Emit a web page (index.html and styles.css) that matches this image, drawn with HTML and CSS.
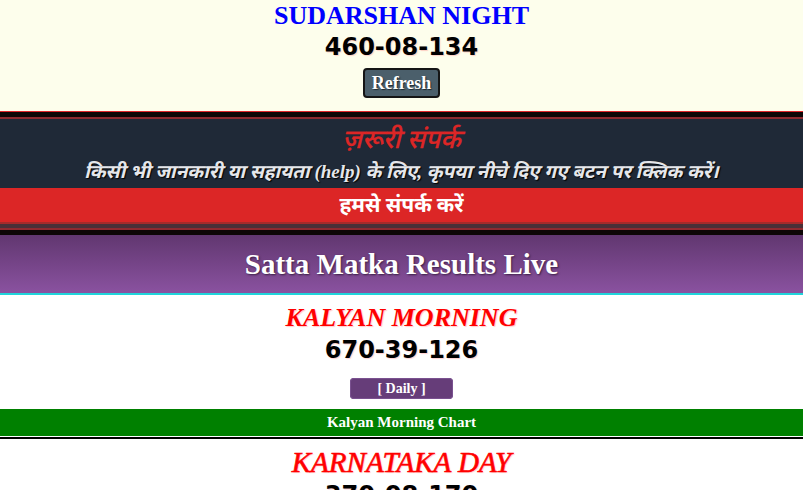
FILE: index.html
```html
<!DOCTYPE html>
<html lang="hi">
<head>
<meta charset="utf-8">
<title>Satta Matka Results Live</title>
<link rel="stylesheet" href="styles.css">
</head>
<body>
  <section class="live-top">
    <div class="live-name">SUDARSHAN NIGHT</div>
    <div class="result-num live-num">460-08-134</div>
    <button class="refresh-btn">Refresh</button>
  </section>

  <section class="contact-wrap">
    <div class="contact-box">
      <div class="contact-title">ज़रूरी संपर्क</div>
      <div class="contact-text">किसी भी जानकारी या सहायता (help) के लिए, कृपया नीचे दिए गए बटन पर क्लिक करें।</div>
      <div class="contact-btn">हमसे संपर्क करें</div>
    </div>
  </section>

  <header class="results-head">Satta Matka Results Live</header>

  <section class="game-card">
    <div class="game-name">KALYAN MORNING</div>
    <div class="result-num">670-39-126</div>
    <span class="daily-btn">[ Daily ]</span>
    <div class="chart-bar">Kalyan Morning Chart</div>
  </section>

  <section class="game-card">
    <div class="game-name game-name-narrow">KARNATAKA DAY</div>
    <div class="result-num">370-08-170</div>
    <span class="daily-btn">[ Daily ]</span>
    <div class="chart-bar">Karnataka Day Chart</div>
  </section>
</body>
</html>
```

FILE: styles.css
```css
html, body {
  margin: 0;
  padding: 0;
  background: #ffffff;
}

body {
  font-family: "Liberation Serif", "Noto Sans Devanagari", serif;
}

.live-top {
  background: #fdfeec;
  display: flex;
  flex-direction: column;
  align-items: center;
  padding: 2px 0 13px;
  border-bottom: 1px solid #e0262a;
}

.live-name {
  color: #0000ff;
  font-weight: bold;
  font-size: 26px;
  line-height: 28px;
}

.result-num {
  font-family: "DejaVu Sans", "Liberation Sans", sans-serif;
  font-weight: bold;
  font-size: 24px;
  line-height: 28px;
  color: #000;
  margin-top: 3px;
  text-shadow: 1px 1px 1px rgba(255, 120, 120, 0.35);
}

.refresh-btn {
  margin-top: 7px;
  font-family: "Liberation Serif", serif;
  font-weight: bold;
  font-size: 18px;
  line-height: 22px;
  color: #ffffff;
  background: #4b5f6b;
  border: 2px solid #151515;
  border-radius: 4px;
  padding: 2px 7px;
  text-shadow: 1px 1px 1px #1c2a33;
}

.contact-wrap {
  background: #0d0606;
  padding: 5px 0;
}

.contact-box {
  background: #1f2937;
  border-top: 2px solid #8e2a30;
  border-bottom: 2px solid #8e2a30;
  text-align: center;
}

.contact-title {
  color: #dc2626;
  font-style: italic;
  font-weight: 500;
  font-size: 26px;
  line-height: 34px;
  padding-top: 4px;
  -webkit-text-stroke: 0.3px #dc2626;
}

.contact-text {
  color: #e5e7eb;
  font-style: italic;
  font-weight: bold;
  font-size: 19px;
  line-height: 29px;
  text-shadow: 1px 1px 1px #000;
}

.contact-btn {
  margin-top: 2px;
  margin-bottom: 6px;
  background: #dc2626;
  color: #ffffff;
  font-weight: bold;
  font-size: 21px;
  line-height: 34px;
  box-shadow: 0 2px 0 #a62b2b, 0 6px 0 #4a3038;
}

.results-head {
  background: linear-gradient(#613770, #8a52a0);
  color: #ffffff;
  font-weight: bold;
  font-size: 29px;
  line-height: 58px;
  text-align: center;
  border-bottom: 2px solid #20d4da;
  text-shadow: 1px 1px 2px #3a1f45;
}

.game-card {
  display: flex;
  flex-direction: column;
  align-items: center;
  padding-top: 8px;
  border-bottom: 2px solid #000;
  text-align: center;
}

.game-name {
  color: #ff0000;
  font-weight: bold;
  font-style: italic;
  font-size: 26px;
  line-height: 29px;
  text-shadow: 1px 1px 1px rgba(255, 0, 0, 0.2);
}

.game-name-narrow {
  font-size: 29px;
  line-height: 30px;
  letter-spacing: 0;
  font-weight: normal;
  -webkit-text-stroke: 0.6px #ff0000;
}

.game-card .result-num {
  margin-top: 4px;
}

.daily-btn {
  margin-top: 14px;
  background: #663d79;
  color: #ffffff;
  font-weight: bold;
  font-size: 14px;
  line-height: 21px;
  padding: 0 27px;
  border-radius: 4px;
  box-shadow: inset 0 0 0 1px #7a5190;
}

.chart-bar {
  align-self: stretch;
  margin-top: 10px;
  margin-bottom: 1px;
  background: #008000;
  color: #ffffff;
  font-weight: bold;
  font-size: 15px;
  line-height: 27px;
}
```
